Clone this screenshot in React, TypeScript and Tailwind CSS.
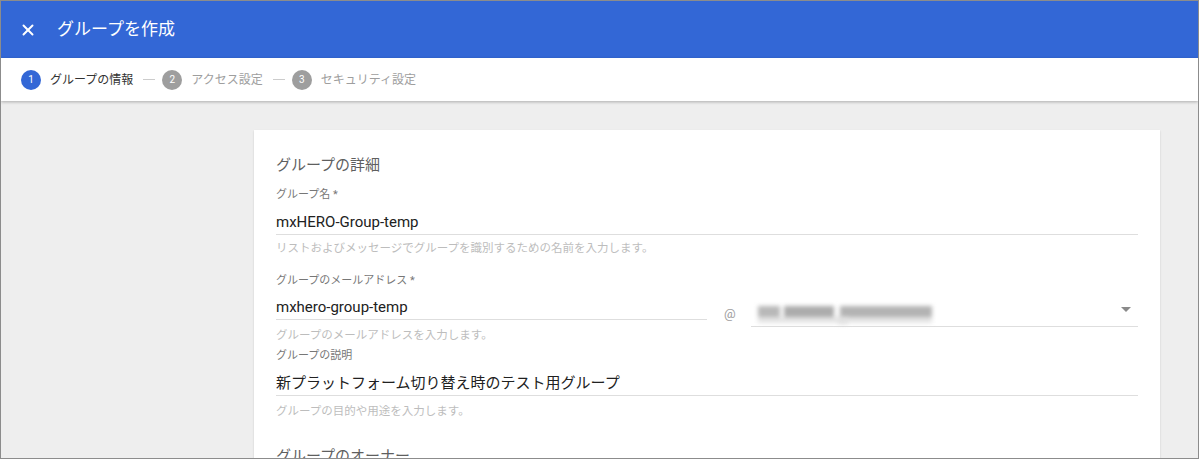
import React from 'react';
import { X } from 'lucide-react';

const font = "font-['Roboto','Noto_Sans_CJK_JP',sans-serif]";

const Step = ({ n, label, active }: { n: number; label: string; active?: boolean }) => (
  <div className="flex items-center gap-[9px]">
    <span
      className={`w-[20px] h-[20px] rounded-full flex items-center justify-center text-[10px] text-white ${
        active ? 'bg-[#3367d6]' : 'bg-[#9e9e9e]'
      }`}
    >
      {n}
    </span>
    <span className={`text-[12px] ${active ? 'text-[#333333]' : 'text-[#9e9e9e]'}`}>{label}</span>
  </div>
);

const Dash = () => <span className="block w-[12px] h-px bg-[#cccccc] ml-[10px] mr-[7px]" />;

const Blurred = () => (
  <div className="relative h-[20px] w-[180px] blur-[2px]">
    <div className="absolute left-[4px] top-[2px] h-[11px] w-[22px] bg-[#b8b8b8]" />
    <div className="absolute left-[30px] top-[2px] h-[11px] w-[50px] bg-[#acacac]" />
    <div className="absolute left-[86px] top-[2px] h-[11px] w-[92px] bg-[#b3b3b3]" />
    <div className="absolute left-[84px] top-[12px] h-[8px] w-[10px] bg-[#cacaca]" />
    <div className="absolute left-[4px] top-[13px] h-[6px] w-[174px] bg-[#e4e4e4]" />
  </div>
);

export default function App() {
  return (
    <div className={`w-[1200px] h-[461px] bg-white ${font}`}>
      <div className="w-[1199px] h-[459px] border border-[#8c8c8c] bg-[#eeeeee] overflow-hidden flex flex-col">
        <div className="h-[57px] bg-[#3367d6] flex items-center pl-[18px] shrink-0">
          <X size={18} strokeWidth={2.6} className="text-white" />
          <span className="ml-[20px] text-[17px] text-white">グループを作成</span>
        </div>
        <div className="h-[43px] bg-white flex items-center pl-[20px] shadow-[0_1px_3px_rgba(0,0,0,0.28)] relative z-10 shrink-0">
          <Step n={1} label="グループの情報" active />
          <Dash />
          <Step n={2} label="アクセス設定" />
          <Dash />
          <Step n={3} label="セキュリティ設定" />
        </div>
        <div className="ml-[253px] mt-[29px] w-[906px] bg-white shadow-[0_1px_2px_rgba(0,0,0,0.14)] px-[22px] pt-[25px] pb-[20px] flex flex-col">
          <div className="text-[15px] leading-5 text-[#5f5f5f]">グループの詳細</div>

          <div className="mt-[12px] text-[11px] leading-4 text-[#777777]">グループ名 *</div>
          <div className="mt-[7px] h-[25px] leading-6 text-[15px] text-[#212121] border-b border-[#dedede]">
            mxHERO-Group-temp
          </div>
          <div className="mt-[5px] text-[11.5px] leading-4 text-[#bdbdbd]">
            リストおよびメッセージでグループを識別するための名前を入力します。
          </div>

          <div className="mt-[17px] text-[11px] leading-4 text-[#777777]">グループのメールアドレス *</div>
          <div className="mt-[6px] flex items-start">
            <div className="w-[431px] flex flex-col">
              <div className="h-[25px] leading-6 text-[15px] text-[#212121] border-b border-[#dedede]">
                mxhero-group-temp
              </div>
              <div className="mt-[7px] text-[11.5px] leading-4 text-[#bdbdbd]">
                グループのメールアドレスを入力します。
              </div>
            </div>
            <span className="ml-[17px] mt-[11px] text-[13px] leading-4 text-[#9e9e9e]">@</span>
            <div className="ml-[15px] mt-[7px] flex-1 h-[25px] border-b border-[#dedede] flex items-center justify-between pl-[3px] pr-[7px]">
              <Blurred />
              <span className="w-0 h-0 border-l-[5px] border-r-[5px] border-t-[5px] border-l-transparent border-r-transparent border-t-[#8a8a8a] -mt-[10px]" />
            </div>
          </div>

          <div className="mt-[5px] text-[11px] leading-4 text-[#777777]">グループの説明</div>
          <div className="mt-[7px] h-[25px] leading-6 text-[15px] text-[#212121] border-b border-[#dedede]">
            新プラットフォーム切り替え時のテスト用グループ
          </div>
          <div className="mt-[7px] text-[11.5px] leading-4 text-[#bdbdbd]">
            グループの目的や用途を入力します。
          </div>

          <div className="mt-[27px] text-[15px] leading-5 text-[#5f5f5f]">グループのオーナー</div>
        </div>
      </div>
    </div>
  );
}
